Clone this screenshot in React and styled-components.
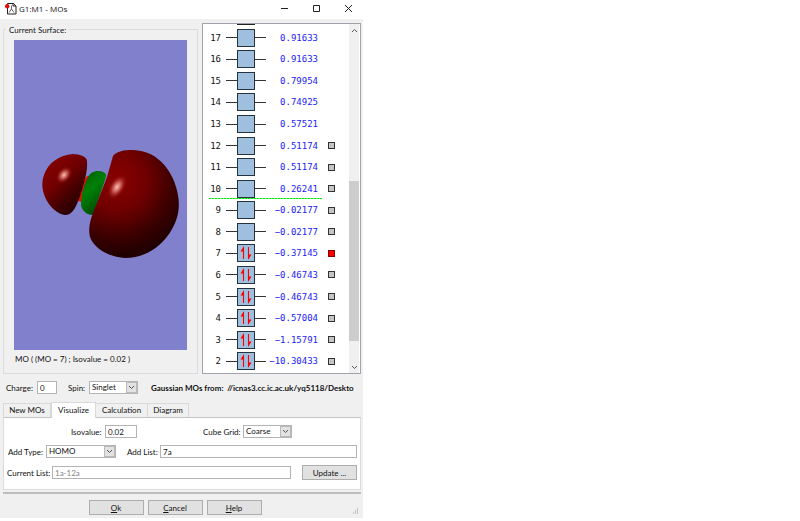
import React, { useState } from 'react';
import styled, { createGlobalStyle } from 'styled-components';

const GlobalStyle = createGlobalStyle`
  * { box-sizing: border-box; }
  body { margin: 0; background: #fff; }
  button, input, select { font: inherit; color: inherit; margin: 0; border-radius: 0; }
`;

const Dialog = styled.main`
  width: 100%;
  max-width: 363px;
  background: #f0f0f0;
  color: #111;
  font: 8px/12px Lato, "Liberation Sans", sans-serif;
`;

const TitleBar = styled.header`
  display: flex;
  align-items: center;
  height: 19px;
  padding: 0 7px 2px 5px;
  background: #fff;
`;

const Title = styled.h1`
  flex: 1;
  margin: 0 0 0 2px;
  font: 400 8px/12px "Open Sans", "Noto Sans", sans-serif;
`;

const WindowControls = styled.div`
  display: flex;
  gap: 17px;
`;

const WindowButton = styled.button`
  display: grid;
  place-items: center;
  width: 15px;
  height: 15px;
  padding: 0;
  border: 0;
  background: none;
`;

const Workspace = styled.div`
  display: flex;
  gap: 4px;
  padding: 4px 2px 0 3px;
`;

const SurfaceGroup = styled.section`
  position: relative;
  flex: 1;
  min-width: 0;
  margin-top: 6px;
  padding: 10px 10px 8px;
  border: 1px solid #dcdcdc;
`;

const GroupLabel = styled.h2`
  position: absolute;
  top: -6px;
  left: 2px;
  margin: 0;
  padding: 0 3px;
  background: #f0f0f0;
  font: inherit;
`;

const Viewport = styled.svg`
  display: block;
  width: 100%;
  height: 310px;
  background: #8080cc;
`;

const Caption = styled.p`
  margin: 3px 0 0 1px;
`;

const OrbitalPanel = styled.section`
  display: flex;
  width: 159px;
  border: 1px solid #a2a2ac;
  background: #fff;
`;

const OrbitalList = styled.ul`
  flex: 1;
  display: grid;
  grid-template-rows: 3px;
  grid-auto-rows: 1fr;
  height: 349px;
  margin: 0;
  padding: 0 0 1px;
  list-style: none;
`;

const ClippedLevel = styled.li`
  width: 18px;
  height: 1px;
  margin-left: 34px;
  background: #222;
`;

const OrbitalRow = styled.li`
  position: relative;
  display: grid;
  grid-template-columns: 18px 40px 52px 7px;
  column-gap: 5px;
  align-items: center;
  font-family: "DejaVu Sans Mono", monospace;
  font-size: 9px;

  &::after {
    content: "";
    display: ${(p) => (p.$gapBelow ? 'block' : 'none')};
    position: absolute;
    left: 6px;
    bottom: 1px;
    width: 113px;
    height: 1px;
    background: repeating-linear-gradient(to right, #00f400 0 2px, #90fa90 2px 3px);
  }
`;

const Index = styled.span`
  text-align: right;
`;

const Level = styled.span`
  display: flex;
  align-items: center;

  &::before, &::after {
    content: "";
    flex: 1;
    height: 1px;
    background: #333;
  }
`;

const LevelBox = styled.button`
  display: grid;
  place-items: center;
  width: 18px;
  height: 18px;
  padding: 0;
  border: 1px solid #26323e;
  background: #9fbfdf;
`;

const Energy = styled.span`
  justify-self: end;
  padding-right: 5px;
  color: #1c1cf4;
  white-space: nowrap;
`;

const Marker = styled.input`
  appearance: none;
  display: block;
  width: 7px;
  height: 7px;
  border: 1px solid #333;
  background: #c4c4c4;

  &:checked {
    background: #ff0000;
    border-color: #800000;
  }
`;

const ScrollTrack = styled.div`
  display: flex;
  flex-direction: column;
  width: 10px;
  margin-right: 1px;
  background: #f0f0f0;
`;

const ScrollButton = styled.button`
  display: grid;
  place-items: center;
  height: 12px;
  padding: 0;
  border: 0;
  background: #f0f0f0;
`;

const ScrollThumb = styled.div`
  height: 160px;
  margin-top: auto;
  margin-bottom: 20px;
  background: #cdcdcd;
`;

const SettingsRow = styled.div`
  display: flex;
  align-items: center;
  height: 13px;
  margin: 7px 7px 0 6px;
`;

const Label = styled.label`
  width: ${(p) => p.$width || 'auto'};
  margin-right: 4px;
  white-space: nowrap;
`;

const TextBox = styled.input`
  width: ${(p) => p.$width || 'auto'};
  flex: ${(p) => (p.$grow ? 1 : 'none')};
  min-width: 0;
  height: 13px;
  padding: 0 2px;
  border: 1px solid #b4b4b4;
  background: #fff;

  &:disabled { color: #858585; }
`;

const SelectFrame = styled.span`
  display: flex;
  position: relative;
  width: ${(p) => p.$width};
  height: 13px;
`;

const Select = styled.select`
  appearance: none;
  width: 100%;
  padding: 0 13px 1px 2px;
  border: 1px solid #b4b4b4;
  background: #fff;
  line-height: 10px;
`;

const SelectArrow = styled.span`
  position: absolute;
  inset: 1px 1px 1px auto;
  display: grid;
  place-items: center;
  width: 11px;
  border: 1px solid #bbb;
  background: #e2e2e2;
  pointer-events: none;
`;

const Source = styled.p`
  flex: 1;
  min-width: 0;
  margin: 0 0 0 13px;
  white-space: pre;
  font-weight: 700;
`;

const TabList = styled.div`
  display: flex;
  align-items: flex-end;
  margin: 8px 3px 0;
`;

const Tab = styled.button`
  width: ${(p) => p.$width};
  height: ${(p) => (p.$active ? 16 : 14)}px;
  margin-bottom: ${(p) => (p.$active ? -1 : 0)}px;
  z-index: ${(p) => (p.$active ? 1 : 0)};
  padding: 0 0 1px;
  border: 1px solid #d9d9d9;
  border-bottom: 0;
  border-left-width: ${(p) => (p.$joined ? 0 : 1)}px;
  background: ${(p) => (p.$active ? '#fff' : '#f0f0f0')};
`;

const TabPanel = styled.section`
  display: flex;
  flex-direction: column;
  gap: 7px;
  margin: 0 2px 0 3px;
  padding: 7px 3px 9px;
  border: 1px solid #dcdcdc;
  border-top-color: #c4c4c4;
  background: #fff;
`;

const FieldRow = styled.div`
  display: flex;
  align-items: center;
  padding-left: ${(p) => p.$indent || 0}px;
`;

const Field = styled.div`
  display: flex;
  align-items: center;
  flex: ${(p) => (p.$grow ? 1 : 'none')};
  min-width: 0;
  margin-left: ${(p) => p.$offset || 0}px;
`;

const PushButton = styled.button`
  width: 55px;
  height: 15px;
  padding: 0;
  border: 1px solid #adadad;
  background: #e1e1e1;
`;

const Footer = styled.footer`
  display: flex;
  align-items: center;
  justify-content: center;
  position: relative;
  gap: 4px;
  margin: 2px 2px 0 3px;
  padding: 6px 14px 3px 0;
  border-top: 2px solid #bdbdbd;
`;

const ResizeGrip = styled.svg`
  position: absolute;
  right: 2px;
  bottom: 3px;
`;

const ORBITALS = [
  [17, '0.91633'], [16, '0.91633'], [15, '0.79954'], [14, '0.74925'],
  [13, '0.57521'], [12, '0.51174'], [11, '0.51174'], [10, '0.26241'],
  [9, '−0.02177'], [8, '−0.02177'], [7, '−0.37145'], [6, '−0.46743'],
  [5, '−0.46743'], [4, '−0.57004'], [3, '−1.15791'], [2, '−10.30433'],
];

function Chevron({ up }) {
  return (
    <svg width="7" height="5" viewBox="0 0 7 5" fill="none" stroke="#555" strokeWidth="1" aria-hidden="true">
      <path d={up ? 'M1 4 3.5 1.5 6 4' : 'M1 1 3.5 3.5 6 1'} />
    </svg>
  );
}

function AppIcon() {
  return (
    <svg width="12" height="13" viewBox="0 0 12 13" aria-hidden="true">
      <path d="M2.500 1.500h6l2.500 2.500V12H2.500Z" fill="#fff" stroke="#222" />
      <path d="M8 1v3h3" fill="none" stroke="#222" />
      <path d="M6.500 3.500v3.500L4 10.500M6.500 7 9 10.500" fill="none" stroke="#555" strokeWidth=".9" />
      <circle cx="2.200" cy="4.300" r="2.200" fill="#e80808" />
    </svg>
  );
}

function ElectronPair() {
  return (
    <svg width="16" height="16" viewBox="0 0 16 16" aria-hidden="true">
      <g stroke="#f00" fill="#f00">
        <path d="M5.500 14V2.500M10.500 2V13.500" strokeWidth="1.100" />
        <path d="M6 1 2.500 6.500H6ZM10 15 13.500 9.500H10Z" stroke="none" />
      </g>
    </svg>
  );
}

function Surface() {
  return (
    <Viewport viewBox="14 40 173 310" role="img" aria-label="Molecular orbital 7 surface">
      <defs>
        <linearGradient id="lobe" x1=".2" y1=".1" x2=".85" y2="1">
          <stop offset="0" stopColor="#850000" />
          <stop offset=".35" stopColor="#700000" />
          <stop offset=".7" stopColor="#390000" />
          <stop offset="1" stopColor="#1c0000" />
        </linearGradient>
        <radialGradient id="large" gradientUnits="userSpaceOnUse" cx="116" cy="180" r="76">
          <stop offset="0" stopColor="#8a0000" />
          <stop offset=".4" stopColor="#700000" />
          <stop offset=".75" stopColor="#3c0000" />
          <stop offset="1" stopColor="#200000" />
        </radialGradient>
        <linearGradient id="green" x1=".2" y1="0" x2=".7" y2="1">
          <stop offset="0" stopColor="#006000" />
          <stop offset=".4" stopColor="#008008" />
          <stop offset="1" stopColor="#004400" />
        </linearGradient>
        <radialGradient id="shine">
          <stop offset="0" stopColor="#ffc4bc" />
          <stop offset=".4" stopColor="#d87068" stopOpacity=".8" />
          <stop offset="1" stopColor="#8a0000" stopOpacity="0" />
        </radialGradient>
      </defs>
      <path d="M87 176C82 182 79 194 78 201L83 202 91 177Z" fill="#f40800" />
      <path d="M73 154C80 154 87 157 87 161C88 170 84 185 79 199C75 209 72 215 65 215C58 214 51 208 47 201C42 192 41 183 44 175C48 163 59 155 73 154Z" fill="url(#lobe)" />
      <path d="M98 171C104 171 107 174 106 177L93 215C87 215 82 211 81 205C81 194 84 185 88 177C90 173 94 171 98 171Z" fill="url(#green)" />
      <path d="M113 156C117 151 124 150 132 150C153 150 167 164 174 181C182 202 180 218 169 234C158 250 142 258 125 258C110 257 94 249 90 237C88 229 90 221 93 213L107 177Z" fill="url(#large)" />
      <ellipse cx="64" cy="175" rx="7" ry="10" transform="rotate(40 64 175)" fill="url(#shine)" />
      <ellipse cx="117" cy="187" rx="8" ry="14" transform="rotate(32 117 187)" fill="url(#shine)" />
    </Viewport>
  );
}

function DropDown({ id, width, options }) {
  return (
    <SelectFrame $width={width}>
      <Select id={id}>
        {options.map((o) => <option key={o}>{o}</option>)}
      </Select>
      <SelectArrow><Chevron /></SelectArrow>
    </SelectFrame>
  );
}

const TABS = [['New MOs', '48px'], ['Visualize', '45px'], ['Calculation', '52px'], ['Diagram', '41px']];

export default function App() {
  const [tab, setTab] = useState('Visualize');
  return (
    <>
      <GlobalStyle />
      <Dialog>
        <TitleBar>
          <AppIcon />
          <Title>G1:M1 - MOs</Title>
          <WindowControls>
            <WindowButton aria-label="Minimize">
              <svg width="9" height="9"><path d="M1 4.500h7" stroke="#222" /></svg>
            </WindowButton>
            <WindowButton aria-label="Maximize">
              <svg width="9" height="9"><path d="M1.500 1.500h6v6h-6Z" stroke="#222" fill="none" /></svg>
            </WindowButton>
            <WindowButton aria-label="Close">
              <svg width="9" height="9"><path d="m1 1 7 7M8 1 1 8" stroke="#222" /></svg>
            </WindowButton>
          </WindowControls>
        </TitleBar>

        <Workspace>
          <SurfaceGroup>
            <GroupLabel>Current Surface:</GroupLabel>
            <Surface />
            <Caption>MO ( (MO = 7) ; Isovalue = 0.02 )</Caption>
          </SurfaceGroup>
          <OrbitalPanel aria-label="Orbitals">
            <OrbitalList>
              <ClippedLevel />
              {ORBITALS.map(([n, energy]) => (
                <OrbitalRow key={n} $gapBelow={n === 10}>
                  <Index>{n}</Index>
                  <Level>
                    <LevelBox aria-label={`Orbital ${n}`}>{n <= 7 && <ElectronPair />}</LevelBox>
                  </Level>
                  <Energy>{energy}</Energy>
                  {n <= 12 && <Marker type="checkbox" aria-label={`Show orbital ${n}`} defaultChecked={n === 7} />}
                </OrbitalRow>
              ))}
            </OrbitalList>
            <ScrollTrack>
              <ScrollButton aria-label="Scroll up"><Chevron up /></ScrollButton>
              <ScrollThumb />
              <ScrollButton aria-label="Scroll down"><Chevron /></ScrollButton>
            </ScrollTrack>
          </OrbitalPanel>
        </Workspace>

        <SettingsRow>
          <Label htmlFor="charge" $width="27px">Charge:</Label>
          <TextBox id="charge" $width="20px" defaultValue="0" />
          <Field $offset={11}>
            <Label htmlFor="spin" $width="17px">Spin:</Label>
            <DropDown id="spin" width="49px" options={['Singlet', 'Triplet']} />
          </Field>
          <Source>{'Gaussian MOs from:  //icnas3.cc.ic.ac.uk/yq5118/Deskto'}</Source>
        </SettingsRow>

        <TabList role="tablist">
          {TABS.map(([name, width], i) => (
            <Tab key={name} role="tab" aria-selected={tab === name} $active={tab === name} $joined={i > 1} $width={width} onClick={() => setTab(name)}>
              {name}
            </Tab>
          ))}
        </TabList>
        <TabPanel role="tabpanel" aria-label={tab}>
          <FieldRow $indent={64}>
            <Label htmlFor="iso" $width="30px">Isovalue:</Label>
            <TextBox id="iso" $width="32px" defaultValue="0.02" />
            <Field $offset={66}>
              <Label htmlFor="grid" $width="36px">Cube Grid:</Label>
              <DropDown id="grid" width="49px" options={['Coarse', 'Medium', 'Fine']} />
            </Field>
          </FieldRow>
          <FieldRow $indent={1}>
            <Label htmlFor="type" $width="34px">Add Type:</Label>
            <DropDown id="type" width="70px" options={['HOMO', 'LUMO']} />
            <Field $grow $offset={11}>
              <Label htmlFor="add" $width="29px">Add List:</Label>
              <TextBox id="add" $grow defaultValue="7a" />
            </Field>
          </FieldRow>
          <FieldRow>
            <Label htmlFor="current" $width="41px">Current List:</Label>
            <TextBox id="current" $grow disabled defaultValue="1a-12a" />
            <Field $offset={11}>
              <PushButton>Update ...</PushButton>
            </Field>
          </FieldRow>
        </TabPanel>

        <Footer>
          <PushButton><u>O</u>k</PushButton>
          <PushButton><u>C</u>ancel</PushButton>
          <PushButton><u>H</u>elp</PushButton>
          <ResizeGrip width="7" height="7" viewBox="0 0 7 7" aria-hidden="true">
            <path d="M5 1h1M3 3h1M5 3h1M1 5h1M3 5h1M5 5h1" stroke="#999" strokeWidth="1" />
          </ResizeGrip>
        </Footer>
      </Dialog>
    </>
  );
}
